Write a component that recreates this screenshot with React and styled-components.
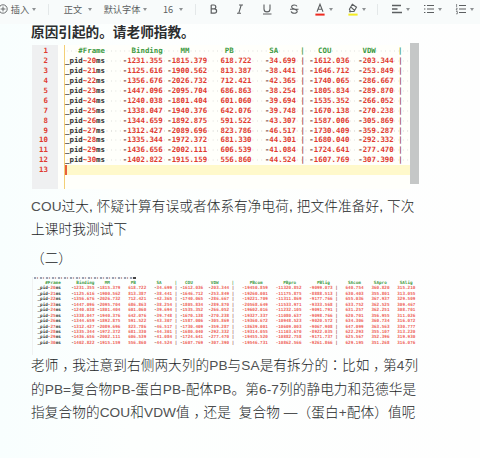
import React from "react";
import styled, { createGlobalStyle } from "styled-components";

const Global = createGlobalStyle`
  * { box-sizing: border-box; }
  body { margin: 0; background: #fcfefe; overflow: hidden; }
`;

const Page = styled.div`
  width: 480px;
  height: 458px;
  overflow: hidden;
  background: linear-gradient(90deg, #f8fefe 0, #fdfffe 130px, #fefefe 100%);
  color: #222526;
  font-family: "Liberation Sans", "Noto Sans CJK SC", sans-serif;
`;

const Toolbar = styled.header`
  height: 24px;
  padding-bottom: 6px;
  display: flex;
  align-items: center;
  background: #f8fbfb;
  color: #5c5f61;
`;

const Tool = styled.div`
  flex: none;
  width: ${(p) => p.$w}px;
  margin-left: ${(p) => p.$gap || 0}px;
  display: flex;
  justify-content: center;
  svg { display: block; flex: none; overflow: visible; }
`;

const Label = styled(Tool)`
  font: 9.2px/16px "Noto Sans CJK SC", sans-serif;
  white-space: nowrap;
`;

const Divider = styled.div`
  flex: none;
  width: 1px;
  height: 11px;
  margin-left: ${(p) => p.$gap}px;
  background: #e4e8e9;
`;

const Caret = styled.div`
  flex: none;
  width: 4px;
  margin-left: ${(p) => p.$gap}px;
  border: 2px solid transparent;
  border-top: 3px solid #8d9193;
  border-bottom: 0;
`;

const Title = styled.h1`
  margin: 0 0 0 31px;
  height: 19px;
  font: 700 13.65px/14px "Noto Sans CJK SC", sans-serif;
  color: #2c2e2f;
  white-space: nowrap;
`;

const Editor = styled.div`
  margin: 0 0 0 32px;
  width: 387px;
  height: 153px;
  display: flex;
  font: 700 7.38px/9.95px "DejaVu Sans Mono", monospace;
  color: #e0392f;
`;

const Gutter = styled.div`
  width: 26px;
  height: 144px;
  margin-top: 2px;
  padding-top: 1px;
  padding-right: 10px;
  text-align: right;
  background: #eff0f1;
`;

const Code = styled.div`
  width: 352px;
  height: 144px;
  margin-top: 2px;
  padding-left: 6px;
  background: #fffffb;
`;

const Lines = styled.div`
  height: 144px;
  padding-top: 1px;
  border-left: 1px solid #f3cf76;
`;

const Row = styled.div`
  height: ${(p) => p.$h}px;
  white-space: pre;
  ${(p) =>
    p.$dots &&
    "background: radial-gradient(circle at center, #d9dad6 0.4px, transparent 0.8px) 0 0 / 4.43px 9.95px;"}
`;

const ActiveRow = styled.div`
  height: 10px;
  background: #fff9cb;
  border-left: 2px solid #e8603c;
`;

const ScrollTrack = styled.div`
  width: 9px;
  height: 141px;
  background: #c5c7c7;
`;

const Green = styled.span`color: #3d9a42;`;
const Dark = styled.span`color: #343434;`;
const Bar = styled.span`color: #93434a;`;
const Minus = styled.span`color: #7d4440;`;

const Line = styled.p`
  margin: 0 0 0 31px;
  height: ${(p) => p.$h}px;
  font-size: 13.65px;
  font-weight: 300;
  line-height: 22px;
  letter-spacing: ${(p) => p.$ls || 0}px;
  white-space: pre;
`;

const Mid = styled.span`
  font-family: "Noto Sans CJK TC", sans-serif;
  line-height: 0;
  vertical-align: ${(p) => (p.$low ? -4 : 0)}px;
`;
const Latin = styled.span`color: #4f5152;`;

const WideSheet = styled.div`
  margin: 0 0 0 32px;
  width: 388px;
  height: 78px;
  padding: 0 0 0 4.5px;
  font: 700 4.3px/5.45px "DejaVu Sans Mono", monospace;
  color: #ee6258;
  border-left: 1px solid #f0f2f2;
`;

const Ruler = styled.div`
  width: 102px;
  height: 2px;
  margin-left: -4px;
  margin-bottom: 1px;
  background: repeating-linear-gradient(90deg, #9aa2b4 0 2px, #e9ecef 2px 3px, #c8a7a7 3px 4px, #f5f6f6 4px 6px);
  border-right: 3px solid #444;
`;

const data = [
  ["-1231.355", "-1815.379", "618.722", "-34.699", "-1612.036", "-203.344", "-19450.859", "-11320.852", "-9099.073", "640.754", "360.820", "315.210"],
  ["-1125.616", "-1900.562", "813.387", "-38.441", "-1646.712", "-253.849", "-19260.001", "-11175.875", "-8888.513", "630.403", "355.801", "313.055"],
  ["-1356.676", "-2026.732", "712.421", "-42.365", "-1740.065", "-286.667", "-19221.709", "-11311.869", "-9177.766", "655.036", "367.937", "329.509"],
  ["-1447.096", "-2095.704", "686.863", "-38.254", "-1805.834", "-289.870", "-20568.649", "-11533.971", "-9333.568", "633.752", "362.525", "309.467"],
  ["-1240.038", "-1801.404", "601.060", "-39.694", "-1535.352", "-266.052", "-19602.016", "-11232.105", "-9091.791", "631.257", "362.251", "308.701"],
  ["-1338.047", "-1940.376", "642.076", "-39.748", "-1670.138", "-270.238", "-19327.337", "-11080.637", "-9098.766", "620.701", "356.955", "311.026"],
  ["-1344.659", "-1892.875", "591.522", "-43.307", "-1587.006", "-305.869", "-19360.672", "-10948.523", "-9020.572", "634.306", "360.734", "316.072"],
  ["-1312.427", "-2089.696", "823.786", "-46.517", "-1730.409", "-359.287", "-18639.001", "-10609.003", "-9067.908", "647.099", "363.563", "330.777"],
  ["-1335.344", "-1972.372", "681.330", "-44.301", "-1680.040", "-292.332", "-19314.055", "-11103.670", "-8922.035", "622.293", "355.107", "313.220"],
  ["-1436.656", "-2002.111", "606.539", "-41.084", "-1724.641", "-277.470", "-19455.520", "-10882.758", "-9171.737", "625.567", "352.396", "319.930"],
  ["-1402.822", "-1915.159", "556.860", "-44.524", "-1607.769", "-307.390", "-19546.731", "-10862.566", "-9261.866", "629.195", "351.268", "316.076"],
];

// Places [column, text] pairs on a fixed character grid.
const onGrid = (from, cells) => {
  let out = "";
  cells.forEach(([col, text]) => {
    out = out.padEnd(col - from) + text;
  });
  return out;
};

const Signed = ({ text }) =>
  text.split(/(-)/).map((s, i) => (s === "-" ? <Minus key={i}>-</Minus> : s));

// Latin runs take a softer grey; full-width commas and colons sit centred in their cell.
const Prose = ({ text }) =>
  text.split(/([A-Za-z0-9=+\-—]+|[，：])/).map((s, i) => {
    if (i % 2 === 0) return s;
    return /[，：]/.test(s) ? <Mid key={i} $low={s === "，"}>{s}</Mid> : <Latin key={i}>{s}</Latin>;
  });

const header = onGrid(0, [[3, "#Frame"], [15, "Binding"], [26, "MM"], [36, "PB"], [46, "SA"], [53, "|"], [57, "COU"], [67, "VDW"], [75, "|"]]);
const wideHeader = onGrid(76, [[82, "PBcom"], [95, "PBpro"], [108, "PBlig"], [120, "SAcom"], [130, "SApro"], [140, "SAlig"]]);

const DataRow = ({ r, i, wide }) => (
  <Row $h={wide ? 5.45 : 9.95} $dots={!wide}>
    <Dark>_pid</Dark>~{20 + i}<Dark>ms</Dark>
    <Signed text={onGrid(9, [[13, r[0]], [23, r[1]], [35, r[2]], [45, r[3]], [53, ""]])} />
    <Bar>|</Bar>
    <Signed text={onGrid(54, [[55, r[4]], [66, r[5]], [75, ""]])} />
    <Bar>|</Bar>
    {wide && (
      <>
        {onGrid(76, [[79, r[6]], [92, r[7]], [105, r[8]], [115, ""]])}
        <Bar>|</Bar>
        {onGrid(116, [[119, r[9]], [129, r[10]], [139, r[11]]])}
      </>
    )}
  </Row>
);

const Icon = ({ w = 12, h = 12, children }) => (
  <svg width={w} height={h} viewBox={`0 0 ${w} ${h}`} fill="none" stroke="#5c5f61" strokeWidth="1.1">
    {children}
  </svg>
);

export default function App() {
  return (
    <Page>
      <Global />
      <Toolbar>
        <Tool $w={10} $gap={-2}>
          <Icon w={10} h={10}><circle cx="5" cy="5" r="4.2" strokeWidth="0.9" /><path d="M5 2.6v4.8M2.6 5h4.8" strokeWidth="0.9" /></Icon>
        </Tool>
        <Label $w={18} $gap={3}>插入</Label>
        <Caret $gap={3} />
        <Divider $gap={12} />
        <Label $w={18} $gap={15}>正文</Label>
        <Caret $gap={6} />
        <Label $w={36} $gap={12}>默认字体</Label>
        <Caret $gap={3} />
        <Label $w={10} $gap={16}>16</Label>
        <Caret $gap={6} />
        <Divider $gap={12} />
        <Tool $w={12} $gap={12}>
          <Icon><path d="M3.2 2v8.2h3.2a2.2 2.2 0 0 0 0-4.4H3.2M3.2 2h2.7a1.9 1.9 0 0 1 0 3.8" strokeWidth="1.2" /></Icon>
        </Tool>
        <Tool $w={12} $gap={14}>
          <Icon><path d="M5 2h4M3 10.2h4M7.2 2L4.8 10.2" /></Icon>
        </Tool>
        <Tool $w={12} $gap={15}>
          <Icon><path d="M3 1.5v4.4a3 3 0 0 0 6 0V1.5M2 11h8.5" /></Icon>
        </Tool>
        <Tool $w={12} $gap={15}>
          <Icon><path d="M9 3.4C8.4 1.6 3.6 1.4 3.6 4c0 2.7 5.6 1.5 5.6 4.2 0 2.8-5.6 2.6-6 .1M2 6.2h8.5" /></Icon>
        </Tool>
        <Tool $w={12} $gap={14}>
          <Icon><path d="M3 8.8L6 1.2l3 7.6M4 6.3h4" /><path d="M1.4 11.6h9.2" stroke="#ee2a20" strokeWidth="2" /></Icon>
        </Tool>
        <Caret $gap={3} />
        <Tool $w={12} $gap={14}>
          <Icon><path d="M5.3 1.2l4.2 3L7 8.5H3.5L2.4 6.2zM4 4.2l3.6 3.3M2 8.8h2" /><path d="M1.4 11.6h9.2" stroke="#f4ec22" strokeWidth="2" /></Icon>
        </Tool>
        <Caret $gap={3} />
        <Divider $gap={11} />
        <Tool $w={12} $gap={13}>
          <Icon><path d="M1 2.5h9M1 6h5.5M1 9.5h10" strokeWidth="1.3" /></Icon>
        </Tool>
        <Caret $gap={3} />
        <Tool $w={12} $gap={13}>
          <Icon><path d="M4 2.5h7M4 6h7M4 9.5h7M1 2.5h1.4M1 6h1.4M1 9.5h1.4" strokeWidth="1.2" /></Icon>
        </Tool>
        <Caret $gap={3} />
        <Tool $w={12} $gap={13}>
          <Icon><path d="M4 2.5h7M4 6h7M4 9.5h7" strokeWidth="1.2" /><path d="M1.6 1v3M1 5.2h1.3L1 7h1.5M1 8.5h1.4v2.3H1" strokeWidth="0.7" /></Icon>
        </Tool>
        <Caret $gap={3} />
      </Toolbar>

      <Title>原因引起的。请老师指教。</Title>

      <Editor>
        <Gutter>
          {Array.from({ length: 13 }, (_, i) => <Row key={i} $h={9.95}>{i + 1}</Row>)}
        </Gutter>
        <Code>
          <Lines>
            <Row $h={9.95} $dots><Green>{header}</Green></Row>
            {data.map((r, i) => <DataRow key={i} r={r} i={i} />)}
            <ActiveRow />
          </Lines>
        </Code>
        <ScrollTrack />
      </Editor>

      <Line $h={23} $ls={0.09}><Prose text="COU过大, 怀疑计算有误或者体系有净电荷, 把文件准备好, 下次" /></Line>
      <Line $h={29} $ls={0.09}>上课时我测试下</Line>
      <Line $h={29}>（二）</Line>

      <WideSheet>
        <Ruler />
        <Row $h={5.45}><Green>{header + wideHeader}</Green></Row>
        {data.map((r, i) => <DataRow key={i} r={r} i={i} wide />)}
      </WideSheet>

      <Line $h={23.5} $ls={0.07}><Prose text="老师，我注意到右侧两大列的PB与SA是有拆分的：比如，第4列" /></Line>
      <Line $h={23.5} $ls={0.08}><Prose text="的PB=复合物PB-蛋白PB-配体PB。第6-7列的静电力和范德华是" /></Line>
      <Line $h={24} $ls={0.09}><Prose text="指复合物的COU和VDW值，还是  复合物 —（蛋白+配体）值呢" /></Line>
    </Page>
  );
}
